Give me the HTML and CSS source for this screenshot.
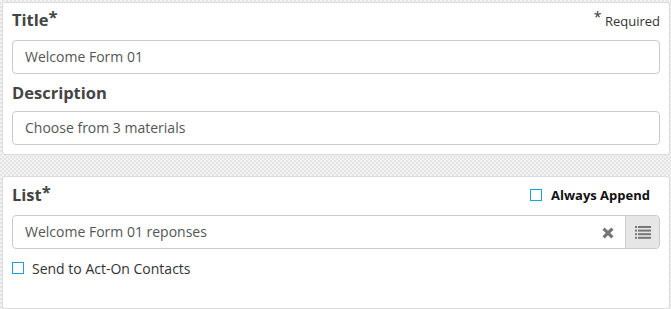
FILE: index.html
```html
<!DOCTYPE html>
<html>
<head>
<meta charset="utf-8">
<link rel="stylesheet" href="styles.css">
</head>
<body>
<div class="page">
  <section class="panel panel-top">
    <div class="label-row">
      <span class="label">Title<span class="star">*</span></span>
      <span class="required"><span class="req-star">*</span> Required</span>
    </div>
    <div class="input input-first">Welcome Form 01</div>
    <div class="label-row label-desc">
      <span class="label">Description</span>
    </div>
    <div class="input input-desc">Choose from 3 materials</div>
  </section>
  <section class="panel panel-list">
    <div class="label-row">
      <span class="label">List<span class="star">*</span></span>
      <span class="append"><span class="checkbox"></span><span class="append-text">Always Append</span></span>
    </div>
    <div class="input input-list">
      <span class="input-text">Welcome Form 01 reponses</span>
      <span class="clear">
        <svg width="12" height="12" viewBox="0 0 12 12"><path d="M1.6 1.6 L10.4 10.4 M10.4 1.6 L1.6 10.4" stroke="#757575" stroke-width="3.2" stroke-linecap="butt"/></svg>
      </span>
      <span class="list-btn">
        <svg width="16" height="13" viewBox="0 0 16 13">
          <rect x="0" y="0" width="2" height="2" fill="#777"/>
          <rect x="3" y="0" width="13" height="2" fill="#777"/>
          <rect x="0" y="3.6" width="2" height="2" fill="#777"/>
          <rect x="3" y="3.6" width="13" height="2" fill="#777"/>
          <rect x="0" y="7.2" width="2" height="2" fill="#777"/>
          <rect x="3" y="7.2" width="13" height="2" fill="#777"/>
          <rect x="0" y="10.8" width="2" height="2" fill="#777"/>
          <rect x="3" y="10.8" width="13" height="2" fill="#777"/>
        </svg>
      </span>
    </div>
    <div class="check-row">
      <span class="checkbox"></span>
      <span class="check-text">Send to Act-On Contacts</span>
    </div>
  </section>
</div>
</body>
</html>
```
FILE: styles.css
```css
html, body {
  margin: 0;
  padding: 0;
}
body {
  font-family: "Open Sans", "DejaVu Sans", sans-serif;
  background-color: #efefef;
  background-image: repeating-conic-gradient(#e4e4e4 0 25%, #f3f3f3 0 50%);
  background-size: 4px 4px;
  width: 671px;
  height: 309px;
  overflow: hidden;
}
.page {
  padding: 2px 1px 1px 2px;
  display: flex;
  flex-direction: column;
  gap: 21px;
}
.panel {
  background: #fff;
  border: 1px solid #dcdcdc;
  border-radius: 3px;
  padding: 5px 9px 9px 9px;
}
.panel-list {
  padding-top: 6px;
  padding-bottom: 30px;
}
.label-row {
  display: flex;
  align-items: baseline;
  justify-content: space-between;
  height: 24px;
  line-height: 24px;
}
.label {
  font-size: 16.5px;
  font-weight: 700;
  color: #444;
}
.star {
  position: relative;
  top: -3px;
}
.required {
  font-size: 13px;
  color: #333;
}
.req-star {
  font-size: 14px;
  position: relative;
  top: -4px;
}
.label-desc {
  margin-top: 7px;
}
.input {
  height: 34px;
  box-sizing: border-box;
  border: 1px solid #cbcbcb;
  border-radius: 4px;
  padding: 0 12px;
  font-size: 14px;
  line-height: 32px;
  color: #555;
}
.input-first {
  margin-top: 8px;
}
.input-desc {
  margin-top: 6px;
}
.input-list {
  margin-top: 8px;
  display: flex;
  align-items: stretch;
  padding-right: 0;
}
.input-text {
  flex: 1;
}
.clear {
  display: flex;
  align-items: center;
  justify-content: center;
  width: 22px;
  padding-right: 6px;
  padding-top: 2px;
}
.list-btn {
  width: 33px;
  background: #e6e6e6;
  border-left: 1px solid #cbcbcb;
  border-radius: 0 3px 3px 0;
  display: flex;
  align-items: center;
  justify-content: center;
}
.append {
  display: flex;
  align-items: center;
  margin-right: 10px;
  align-self: center;
}
.checkbox {
  width: 12px;
  height: 12px;
  box-sizing: border-box;
  border: 1.5px solid #1a9fe3;
  background: #fff;
  display: inline-block;
}
.append-text {
  margin-left: 9px;
  font-size: 13px;
  font-weight: 700;
  color: #111;
}
.check-row {
  margin-top: 9px;
  height: 20px;
  display: flex;
  align-items: center;
}
.check-text {
  margin-left: 8px;
  font-size: 14px;
  color: #333;
}
```
